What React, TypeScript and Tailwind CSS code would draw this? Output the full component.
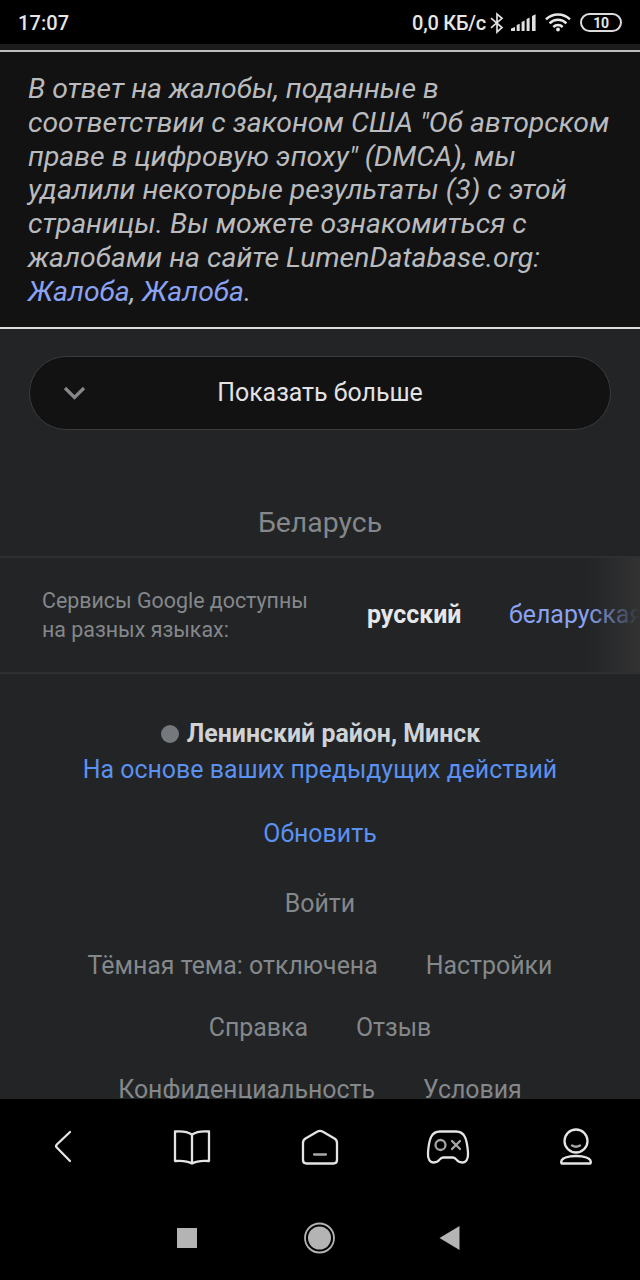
import type { ReactNode } from "react";

const noticeLines = [
  "В ответ на жалобы, поданные в",
  'соответствии с законом США "Об авторском',
  'праве в цифровую эпоху" (DMCA), мы',
  "удалили некоторые результаты (3) с этой",
  "страницы. Вы можете ознакомиться с",
  "жалобами на сайте LumenDatabase.org:",
];

function StatusBar() {
  return (
    <header className="flex h-11 shrink-0 items-center bg-black pl-[18px] pr-[18px] text-[20px] font-medium text-[#e6e6e6]">
      <span className="mt-0.5 flex-1 tracking-[0.1px]">17:07</span>
      <span className="mt-0.5 tracking-[-0.25px]">0,0 КБ/с</span>
      <svg className="ml-[4px] mt-0.5" width="14" height="22" viewBox="0 0 14 22" fill="none" stroke="#e0e0e0" strokeWidth="1.7">
        <path d="M1 6.200 12 15.600 7 20V2l5 4.300L1 15.800" />
      </svg>
      <svg className="ml-[7px]" width="26" height="20" viewBox="0 0 26 20" fill="#e0e0e0">
        <path d="M0 19v-2.500l4-1.500v4zM5.700 19v-6l3-1.300V19zM10.600 19v-9l3-1.400V19zM15.600 19V7l3-1.400V19zM21 19V4l3.600-1.700V19z" />
      </svg>
      <svg className="ml-[8px]" width="26" height="20" viewBox="0 0 26 20" fill="none" stroke="#e8e8e8" strokeWidth="2.500">
        <path d="M1 7.400a17.200 17.200 0 0 1 24 0M4.600 11.300a12 12 0 0 1 16.800 0M8.300 15a6.700 6.700 0 0 1 9.400 0" />
        <circle cx="13" cy="17.500" r="1.900" fill="#e8e8e8" stroke="none" />
      </svg>
      <span className="ml-[9px] flex h-[19px] w-[42px] items-center justify-center rounded-full border-2 border-[#dcdcdc] pt-px text-[14px] font-bold leading-none tracking-[-0.3px]">
        10
      </span>
    </header>
  );
}

function FooterRow({ items }: { items: string[] }) {
  return (
    <div className="flex h-[62px] shrink-0 items-center justify-center gap-12">
      {items.map((item) => (
        <a key={item} className="whitespace-nowrap">{item}</a>
      ))}
    </div>
  );
}

function NavIcon({ children }: { children: ReactNode }) {
  return (
    <button className="flex flex-1 items-center justify-center">
      <svg width="48" height="44" viewBox="0 0 48 44" fill="none" stroke="#e4e4e4" strokeWidth="2.300" strokeLinecap="round" strokeLinejoin="round">
        {children}
      </svg>
    </button>
  );
}

export default function App() {
  return (
    <div className="flex h-[1280px] w-[640px] flex-col overflow-hidden bg-[#222426] font-['Roboto',sans-serif]">
      <StatusBar />
      <div className="h-1.5 shrink-0 bg-[#1c1c1c]" />
      <section className="flex h-[279px] shrink-0 flex-col border-y-2 border-t-[#bdbdbd] border-b-[#dedee4] bg-[#121212] pl-7 pt-[20px] text-[28.4px] italic leading-[33.8px] text-[#b9bbbe]">
        {noticeLines.map((line) => (
          <p key={line} className="whitespace-nowrap">{line}</p>
        ))}
        <p>
          <a className="text-[#8ba2f2]">Жалоба</a>, <a className="text-[#8ba2f2]">Жалоба</a>.
        </p>
      </section>

      <main className="flex min-h-0 flex-1 flex-col overflow-hidden">
        <button className="mx-[29px] mt-[27px] grid h-[74px] shrink-0 grid-cols-[1fr_auto_1fr] items-center rounded-full border border-[#3a3b3d] bg-[#121212] text-[24.9px] text-[#e3e3e6]">
          <svg className="ml-[33px]" width="24" height="18" viewBox="0 0 24 18" fill="none" stroke="#85878a" strokeWidth="3.200">
            <path d="m2 4 9.500 9.500L21 4" />
          </svg>
          <span>Показать больше</span>
        </button>

        <div className="mt-[60px] flex h-[68px] shrink-0 items-center justify-center border-b-2 border-[#2e2f31] text-[28.4px] text-[#85888b]">
          Беларусь
        </div>

        <section className="relative flex h-[116px] shrink-0 items-center overflow-hidden border-b-2 border-[#2e2f31] pl-[42px] text-[24.9px]">
          <p className="w-[325px] shrink-0 pt-px text-[21.400px] leading-[28.500px] text-[#85888b]">
            Сервисы Google доступны
            <br />
            на разных языках:
          </p>
          <span className="w-[142px] shrink-0 font-bold text-[#e6e7e9]">русский</span>
          <a className="whitespace-nowrap text-[#8ba2f2]">беларуская</a>
          <div className="absolute inset-y-0 right-0 w-[54px] bg-gradient-to-r from-[#30303000] to-[#323232]" />
        </section>

        <section className="flex shrink-0 flex-col items-center pt-[42px] text-[24.9px] leading-9 text-[#5b91f0]">
          <div className="flex items-center gap-2 pl-px font-bold text-[#d0d3d6]">
            <span className="size-[18px] rounded-full bg-[#75797d]" />
            Ленинский район, Минск
          </div>
          <a className="whitespace-nowrap">На основе ваших предыдущих действий</a>
          <a className="mt-7">Обновить</a>
        </section>

        <footer className="mt-[21px] flex flex-col text-[24.9px] text-[#85888b]">
          <FooterRow items={["Войти"]} />
          <FooterRow items={["Тёмная тема: отключена", "Настройки"]} />
          <FooterRow items={["Справка", "Отзыв"]} />
          <FooterRow items={["Конфиденциальность", "Условия"]} />
        </footer>
      </main>

      <nav className="flex h-[96px] shrink-0 bg-black pb-0.5">
        <NavIcon>
          <path d="M30 8 16.800 20.500q-1.500 1.500 0 3L30 37" />
        </NavIcon>
        <NavIcon>
          <path d="M24 10.500q-6-4-17-3V37q11-1 17 2.500Q30 36 41 37V7.500q-11-1-17 3zM24 10.500v29" />
        </NavIcon>
        <NavIcon>
          <path d="M21.500 7.500q2.500-1.400 5 0l12 7q2.500 1.500 2.500 4.500V36q0 3.500-3.500 3.500h-27Q7 39.500 7 36V19q0-3 2.500-4.500z" />
          <path d="M18 30.500h12" stroke="#a8a8a8" />
        </NavIcon>
        <NavIcon>
          <path d="M16 7.500h16c9 0 11 8 12 21 .5 7-2 10-6 10-6 0-5-5-9-5H19c-4 0-3 5-9 5-4 0-6.500-3-6-10C5 15.500 7 7.500 16 7.500z" />
          <g stroke="#a5a5a5"><circle cx="16.500" cy="21" r="5" /><path d="m28 17 8 8m0-8-8 8" /></g>
        </NavIcon>
        <NavIcon>
          <circle cx="24" cy="17" r="11.500" />
          <path d="M20 21.500q4 2.500 8 0" stroke="#a8a8a8" />
          <path d="M9.500 39.500c-2-6 8-7.500 14.500-7.500s16.500 1.500 14.500 7.500z" />
        </NavIcon>
      </nav>

      <div className="flex h-[85px] shrink-0 items-center pl-[177px] bg-black">
        <svg width="284" height="32" viewBox="0 0 284 32" fill="#b4b4b4">
          <rect x="0" y="6" width="20" height="20" />
          <circle cx="142.500" cy="16" r="11.500" />
          <circle cx="142.500" cy="16" r="14.500" fill="none" stroke="#b4b4b4" strokeWidth="1.800" />
          <path d="M262.500 16 282.500 4v24z" />
        </svg>
      </div>
    </div>
  );
}
